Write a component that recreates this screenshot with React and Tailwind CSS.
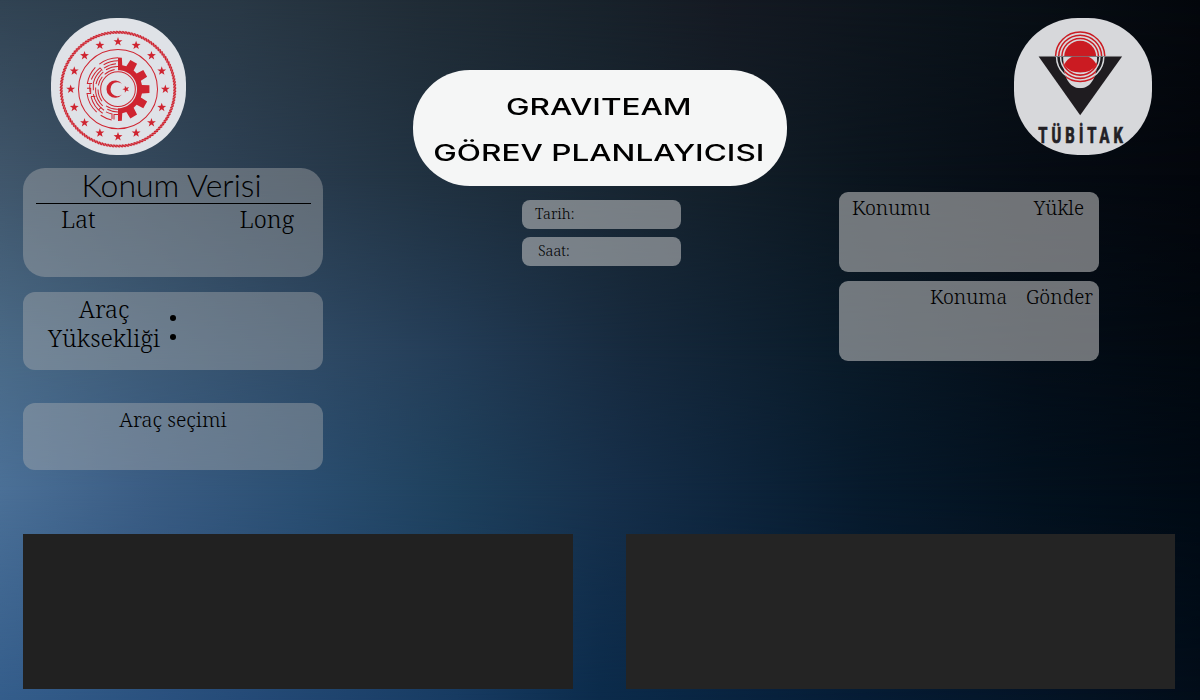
import React from "react";

const C = 237;
const CX = 234;

function star(cx, cy, r, rot) {
  const pts = [];
  for (let i = 0; i < 10; i++) {
    const a = rot + (i * Math.PI) / 5;
    const q = i % 2 ? r * 0.4 : r;
    pts.push((cx + q * Math.sin(a)).toFixed(1) + "," + (cy - q * Math.cos(a)).toFixed(1));
  }
  return pts.join(" ");
}

function gearPath() {
  const p = [];
  const add = (r, deg) => {
    const a = (deg * Math.PI) / 180;
    p.push((CX + r * Math.cos(a)).toFixed(1) + "," + (C + r * Math.sin(a)).toFixed(1));
  };
  for (let k = -3; k <= 3; k++) {
    const d = k * 30;
    if (k > -3) {
      add(73, d - 10);
      add(95, d - 7);
    } else add(95, -90);
    if (k < 3) {
      add(95, d + 7);
      add(73, d + 10);
    } else add(95, 90);
  }
  for (let d = 90; d >= -90; d -= 5) add(57, d);
  return "M" + p.join("L") + "Z";
}

function Ministry() {
  const stars = Array.from({ length: 16 }, (_, i) => (i * Math.PI) / 8);
  const rope = Array.from({ length: 120 }, (_, i) => i * 3);
  return (
    <svg className="block h-[137px] w-[135px]" viewBox="33 24 405 410" preserveAspectRatio="none">
      <rect x="33" y="24" width="405" height="410" rx="196" fill="#dfe2e7" />
      <g fill="none" stroke="#cf2430">
        <circle cx={CX} cy={C} r="170" strokeWidth="8" opacity=".45" />
        {rope.map((d) => (
          <path key={d} d={`M${CX - 5} 63L${CX + 5} 70`} strokeWidth="4" transform={`rotate(${d} ${CX} ${C})`} />
        ))}
        <circle cx={CX} cy={C} r="118.500" strokeWidth="3" />
        <circle cx={CX} cy={C} r="52" strokeWidth="3" />
        <g strokeWidth="3">
          <path d="M234 143A94 94 0 0 0 178 162M166 172A94 94 0 0 0 142 220H150M141 234H152V250H141A94 94 0 0 0 170 306M182 315A94 94 0 0 0 215 329" />
          <path d="M234 152A85 85 0 0 0 191 164M180 173A85 85 0 0 0 154 208M150 222A85 85 0 0 0 150 245M153 259A85 85 0 0 0 188 309M198 305A76 76 0 0 0 216 311V326" />
          <path d="M228 161A76 76 0 0 0 192 174M184 180A76 76 0 0 0 160 218V240M160 252A76 76 0 0 0 192 300M202 297A68 68 0 0 0 234 305" />
          <path d="M234 169A68 68 0 0 0 198 179M190 185A68 68 0 0 0 168 222M167 232V246A68 68 0 0 0 188 287M198 287A60 60 0 0 0 234 297" />
          <path d="M224 178A60 60 0 0 0 194 193M187 200A60 60 0 0 0 175 226M174 238A60 60 0 0 0 186 273" />
          <path d="M142 220H156M153 259H166M234 313H222V328M180 173L187 181M176 299L184 291" />
        </g>
      </g>
      <path d={gearPath()} fill="#cf2430" />
      <path d="M246 221A26 26 0 1 0 246 253A21 21 0 1 1 246 221Z" fill="#cf2430" />
      <polygon points={star(258, C, 11, -Math.PI / 2)} fill="#cf2430" />
      {stars.map((a) => (
        <polygon key={a} points={star(CX + 142 * Math.sin(a), C - 142 * Math.cos(a), 14, 0)} fill="#cf2430" />
      ))}
    </svg>
  );
}

function Tubitak() {
  return (
    <svg className="block h-[137px] w-[138px]" viewBox="42 24 415 410" preserveAspectRatio="none">
      <defs>
        <clipPath id="blob"><rect x="42" y="24" width="415" height="410" rx="192" /></clipPath>
        <clipPath id="up"><rect x="150" y="50" width="190" height="88" /></clipPath>
        <clipPath id="low"><rect x="150" y="140" width="190" height="110" /></clipPath>
        <clipPath id="bowl"><path d="M190 140H292C294 200 274 234 241 234S188 200 190 140Z" /></clipPath>
      </defs>
      <g clipPath="url(#blob)">
        <rect x="42" y="24" width="415" height="410" fill="#d7d8db" />
        <path d="M116 139H367L241 315Z" fill="#1f1c20" />
        <g clipPath="url(#low)" fill="none" stroke="#d7d8db" strokeWidth="4.500">
          <circle cx="241" cy="140" r="71" />
          <circle cx="241" cy="140" r="59" />
        </g>
        <g clipPath="url(#bowl)">
          <rect x="180" y="138" width="120" height="100" fill="#d7d8db" />
          <g fill="none" stroke="#cb1b22" strokeWidth="5">
            <circle cx="241" cy="140" r="74" />
            <circle cx="241" cy="140" r="64.500" />
            <circle cx="241" cy="140" r="55" />
          </g>
        </g>
        <path d="M218 139H265Q282 147 290 163Q276 187 241 187Q207 187 193 163Q201 147 218 139Z" fill="#cb1b22" />
        <g clipPath="url(#up)">
          <circle cx="241" cy="140" r="48" fill="#cb1b22" />
          <g fill="none" stroke="#cb1b22" strokeWidth="4.500">
            <circle cx="241" cy="140" r="74" />
            <circle cx="241" cy="140" r="64.500" />
            <circle cx="241" cy="140" r="55" />
          </g>
        </g>
        <path d="M118 139H367" stroke="#77777b" strokeWidth="1.500" />
        <text transform="translate(115 398) scale(.65 1)" fontFamily="Roboto, sans-serif" fontWeight="800" fontSize="68" textLength="392" fill="#232125" stroke="#232125" strokeWidth="2">TÜBİTAK</text>
      </g>
    </svg>
  );
}

function Backdrop() {
  return (
    <div className="absolute inset-0 -z-10">
      <div className="absolute inset-0 bg-[linear-gradient(90deg,#314353_0%,#293845_20%,#202c36_35%,#18222b_50%,#151a23_60%,#0a1219_80%,#04070c_100%)]" />
      <div className="absolute inset-0 bg-[linear-gradient(90deg,#40566b_0%,#2d4053_20%,#203140_36%,#16232e_55%,#0b151e_72%,#060c14_86%,#03060c_100%)] [mask-image:linear-gradient(180deg,transparent_0%,black_25%)]" />
      <div className="absolute inset-0 bg-[linear-gradient(90deg,#4a6a87_0%,#35516d_20%,#233c56_38%,#16293d_53%,#0a1b29_70%,#040e19_86%,#02080f_100%)] [mask-image:linear-gradient(180deg,transparent_25%,black_50%)]" />
      <div className="absolute inset-0 bg-[linear-gradient(90deg,#4b7097_0%,#3b5d84_12%,#2b4f72_25%,#1e405c_38%,#162f4a_51%,#0c2238_64%,#071a2c_72%,#03111e_86%,#010a14_100%)] [mask-image:linear-gradient(180deg,transparent_50%,black_70%)]" />
      <div className="absolute inset-0 bg-[linear-gradient(90deg,#345d8b_0%,#254b78_20%,#173b62_38%,#0b2b4b_50%,#051c35_72%,#020d19_100%)] [mask-image:linear-gradient(180deg,transparent_70%,black_100%)]" />
    </div>
  );
}

const serif = "font-['Noto_Serif','Liberation_Serif',serif] font-light";

export default function App() {
  return (
    <div className={"relative isolate flex h-[700px] w-[1200px] flex-col overflow-hidden text-black " + serif}>
      <Backdrop />
      <main className="flex h-[534px] pl-[23px]">
        <section className="flex w-[300px] flex-col pt-[18px]">
          <div className="pl-7"><Ministry /></div>
          <div className="mt-[13px] h-[109px] rounded-[22px] bg-[#b4b4b4]/40 px-3 pl-[13px]">
            <h2 className="h-9 border-b border-black pr-1 text-center font-['Lato'] text-[32px] font-light leading-[33px]">Konum Verisi</h2>
            <div className="flex justify-between pl-[25px] pr-[17px] text-[23.5px] leading-[31px]"><span>Lat</span><span>Long</span></div>
          </div>
          <div className="mt-[15px] flex h-[78px] rounded-xl bg-[#b4b4b4]/40 pl-[25px] pt-0.5">
            <div className="flex w-[112px] flex-col items-center whitespace-nowrap text-[24px] leading-[29px]"><span>Araç</span><span>Yüksekliği</span></div>
            <div className="ml-[10px] flex flex-col gap-[13px] pt-[21px]">
              <i className="size-1.5 rounded-full bg-black" />
              <i className="size-1.5 rounded-full bg-black" />
            </div>
          </div>
          <div className="mt-[33px] h-[67px] rounded-xl bg-[#b4b4b4]/40 pt-1 text-center text-[20.2px] leading-6">Araç seçimi</div>
        </section>
        <section className="ml-[90px] flex w-[374px] flex-col items-center pt-[70px]">
          <h1 className="flex h-[116px] w-full flex-col items-center rounded-[57px] bg-[#f5f6f6] pt-[14px] font-['Inter','Liberation_Sans',sans-serif] text-[23px] leading-[46px]">
            <span className="mr-0.5 scale-x-[1.37] font-medium">GRAVITEAM</span>
            <span className="mr-0.5 scale-x-[1.37] whitespace-nowrap font-medium">GÖREV PLANLAYICISI</span>
          </h1>
          <div className="ml-[3px] mt-[14px] flex w-[159px] flex-col gap-2 text-[14.5px] leading-[26px]">
            <div className="h-[29px] rounded-lg bg-[#c8c8c8]/55 pl-[13px]">Tarih:</div>
            <div className="h-[29px] rounded-lg bg-[#c8c8c8]/55 pl-4">Saat:</div>
          </div>
        </section>
        <section className="ml-[52px] flex w-[313px] flex-col pt-[18px]">
          <div className="self-end"><Tubitak /></div>
          <div className="mt-[37px] flex w-[260px] flex-col gap-[9px] text-[19.6px] leading-8">
            <div className="flex h-20 justify-between rounded-[9px] bg-[#c8c8c8]/55 pl-[13px] pr-[15px]"><span>Konumu</span><span>Yükle</span></div>
            <div className="flex h-20 justify-end gap-[19px] rounded-[9px] bg-[#c8c8c8]/55 pr-[6px]"><span>Konuma</span><span>Gönder</span></div>
          </div>
        </section>
      </main>
      <footer className="flex justify-between pl-[23px] pr-[25px]">
        <div className="h-[155px] w-[550px] bg-[#212121]" />
        <div className="h-[155px] w-[549px] bg-[#242424]" />
      </footer>
    </div>
  );
}
